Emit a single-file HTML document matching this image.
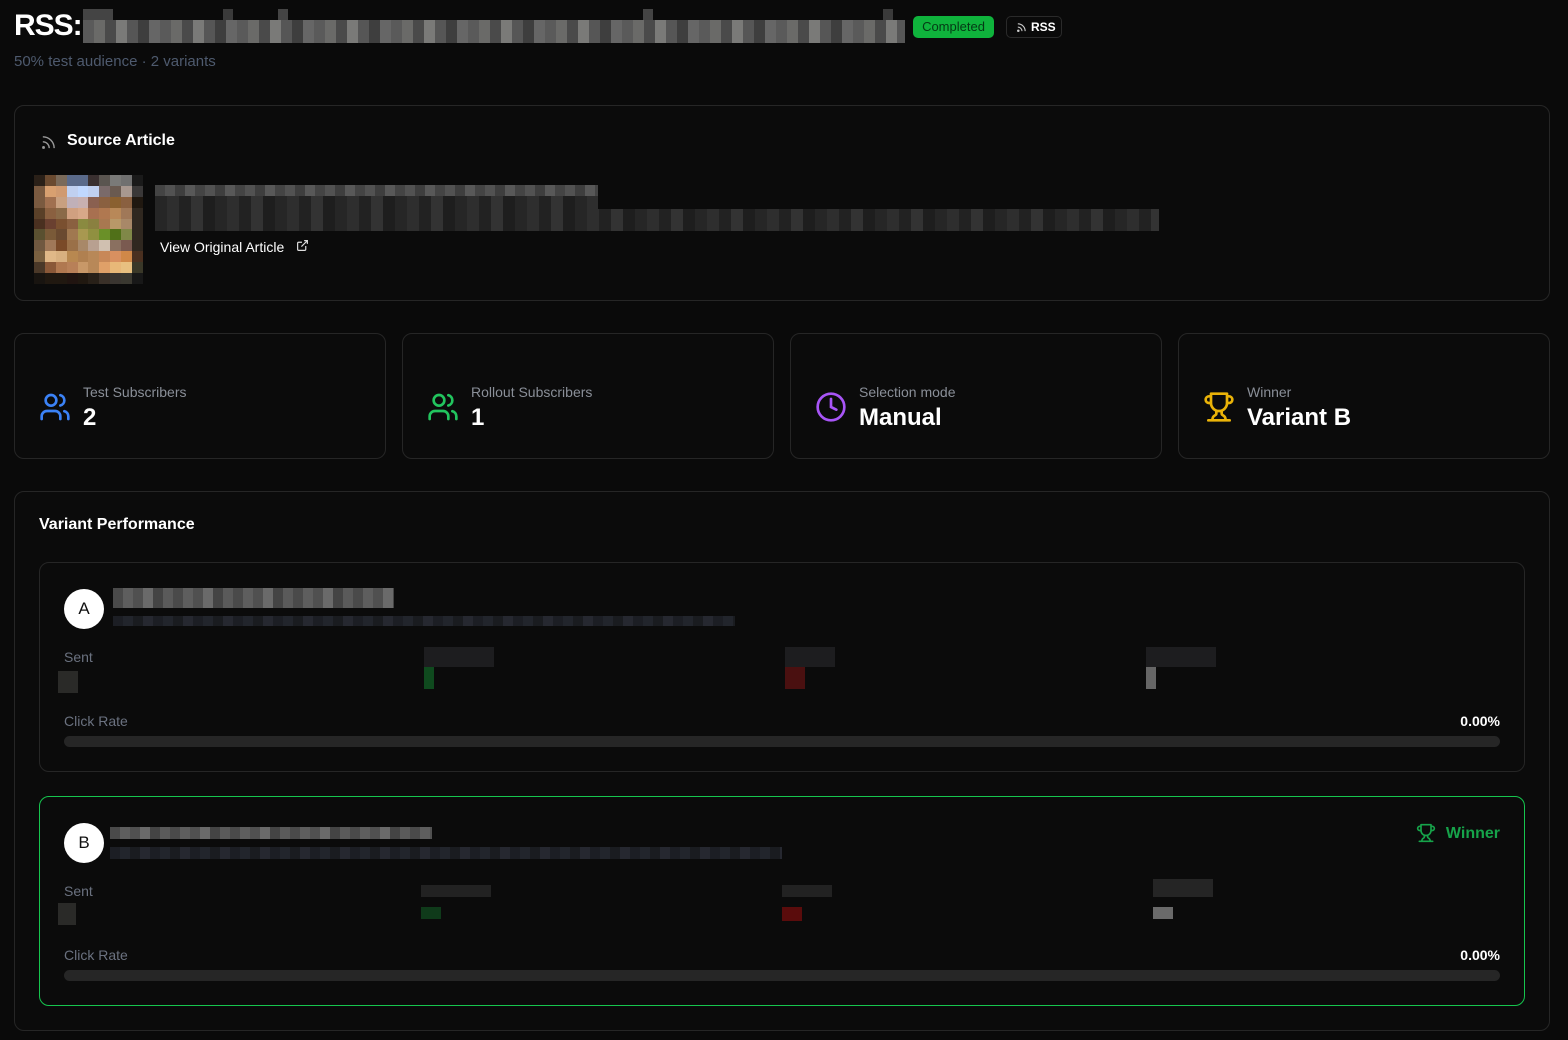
<!DOCTYPE html>
<html><head><meta charset="utf-8"><style>
*{box-sizing:border-box;margin:0;padding:0}
body{width:1568px;height:1040px;background:#0a0a0a;font-family:"Liberation Sans",sans-serif;color:#fff;position:relative;overflow:hidden}
.abs{position:absolute}
.card{position:absolute;border:1px solid #262626;border-radius:10px;background:#0b0b0b}
.blur1{background:repeating-linear-gradient(90deg,#5a5a5a 0 11px,#6a6a68 11px 22px,#4a4a4a 22px 33px,#7a7a78 33px 44px,#565656 44px 55px,#3e3e3e 55px 66px,#666 66px 77px)}
.blur2{background:repeating-linear-gradient(90deg,#262626 0 12px,#2e2e2e 12px 24px,#222 24px 36px,#333 36px 48px,#1e1e1e 48px 60px)}
.blurA{background:repeating-linear-gradient(90deg,#4a4a4a 0 10px,#5e5e5e 10px 20px,#505050 20px 30px,#6a6a6a 30px 40px,#444 40px 50px,#5a5a5a 50px 60px)}
.blurB{background:repeating-linear-gradient(90deg,#1c1e24 0 10px,#22252c 10px 20px,#1a1c20 20px 30px,#262830 30px 40px)}
.lbl{color:#6b7280;font-size:14px}
.stat .t{position:absolute;left:68px;top:50px;font-size:14px;color:#8a8f98}
.stat .v{position:absolute;left:68px;top:70px;font-size:24px;font-weight:bold;color:#fff}
.stat svg{position:absolute;left:24px;top:57px}
.bar{position:absolute;left:24px;right:24px;height:11px;border-radius:6px;background:#262626}
.circ{position:absolute;left:24px;width:40px;height:40px;border-radius:50%;background:#fff;color:#111;font-size:17px;text-align:center;line-height:40px}
.img{display:grid;grid-template-columns:repeat(10,1fr);grid-template-rows:repeat(10,1fr)}
</style></head><body>

<div class="abs" style="left:14px;top:9px;font-size:30px;font-weight:bold;letter-spacing:-1px">RSS:</div>
<div class="abs" style="left:83px;top:9px;width:822px;height:11px;background:linear-gradient(90deg,#444 0 30px,#0a0a0a 30px 140px,#3a3a3a 140px 150px,#0a0a0a 150px 195px,#444 195px 205px,#0a0a0a 205px 560px,#444 560px 570px,#0a0a0a 570px 800px,#3a3a3a 800px 810px,#0a0a0a 810px)"></div>
<div class="abs blur1" style="left:83px;top:20px;width:822px;height:23px"></div>
<div class="abs" style="left:913px;top:16px;width:81px;height:22px;background:#0fb33c;border-radius:5px;color:#053a15;font-size:13px;text-align:center;line-height:22px">Completed</div>
<div class="abs" style="left:1006px;top:16px;width:56px;height:22px;border:1px solid #2a2a2a;border-radius:5px;font-size:12px;font-weight:bold;line-height:20px;padding-left:24px">RSS
<svg class="abs" style="left:9px;top:5px" width="11" height="11" viewBox="0 0 24 24" fill="none" stroke="#ccc" stroke-width="2.5"><path d="M4 11a9 9 0 0 1 9 9M4 4a16 16 0 0 1 16 16"/><circle cx="5" cy="19" r="1.5" fill="#ccc"/></svg></div>
<div class="abs" style="left:14px;top:53px;font-size:15px;color:#4e5a6e">50% test audience · 2 variants</div>

<div class="card" style="left:14px;top:105px;width:1536px;height:196px">
  <svg class="abs" style="left:25px;top:28px" width="17" height="17" viewBox="0 0 24 24" fill="none" stroke="#9a9a9a" stroke-width="2"><path d="M4 11a9 9 0 0 1 9 9M4 4a16 16 0 0 1 16 16"/><circle cx="5" cy="19" r="1" fill="#9a9a9a"/></svg>
  <div class="abs" style="left:52px;top:26px;font-size:16px;font-weight:bold">Source Article</div>
  <div class="abs img" style="left:19px;top:69px;width:109px;height:109px">
    <i style="background:#2a2018"></i><i style="background:#6a4a30"></i><i style="background:#7a6a5a"></i><i style="background:#5a6a8a"></i><i style="background:#5a6a8a"></i><i style="background:#3a3030"></i><i style="background:#5a5550"></i><i style="background:#7a7a78"></i><i style="background:#707070"></i><i style="background:#1a1a1a"></i>
    <i style="background:#7a5a40"></i><i style="background:#d8a070"></i><i style="background:#d09a70"></i><i style="background:#c0d0f0"></i><i style="background:#c0d8ff"></i><i style="background:#c0d0f0"></i><i style="background:#7a6a6a"></i><i style="background:#6a5a50"></i><i style="background:#a89890"></i><i style="background:#3a3838"></i>
    <i style="background:#7a5a40"></i><i style="background:#a07050"></i><i style="background:#c8a080"></i><i style="background:#c0b0b8"></i><i style="background:#c8b0b0"></i><i style="background:#8a6050"></i><i style="background:#8a6040"></i><i style="background:#8a6030"></i><i style="background:#8a6040"></i><i style="background:#201810"></i>
    <i style="background:#5a4028"></i><i style="background:#8a6040"></i><i style="background:#8a6a48"></i><i style="background:#d0a080"></i><i style="background:#d8a888"></i><i style="background:#a87050"></i><i style="background:#b07850"></i><i style="background:#b88858"></i><i style="background:#a07858"></i><i style="background:#302820"></i>
    <i style="background:#4a3020"></i><i style="background:#6a4030"></i><i style="background:#7a5030"></i><i style="background:#8a6040"></i><i style="background:#8a8a40"></i><i style="background:#8a8040"></i><i style="background:#a87850"></i><i style="background:#b89868"></i><i style="background:#a88868"></i><i style="background:#302820"></i>
    <i style="background:#5a5030"></i><i style="background:#7a5a38"></i><i style="background:#6a4a30"></i><i style="background:#a07850"></i><i style="background:#a89850"></i><i style="background:#909040"></i><i style="background:#6a9028"></i><i style="background:#507018"></i><i style="background:#808848"></i><i style="background:#302820"></i>
    <i style="background:#705840"></i><i style="background:#a07858"></i><i style="background:#7a4a28"></i><i style="background:#9a7048"></i><i style="background:#a88868"></i><i style="background:#b8a090"></i><i style="background:#d0c0b0"></i><i style="background:#8a7060"></i><i style="background:#7a5a50"></i><i style="background:#302820"></i>
    <i style="background:#7a6040"></i><i style="background:#e0b888"></i><i style="background:#d8b080"></i><i style="background:#b88850"></i><i style="background:#b08050"></i><i style="background:#b88858"></i><i style="background:#c88858"></i><i style="background:#d89060"></i><i style="background:#d08848"></i><i style="background:#4a3020"></i>
    <i style="background:#4a3828"></i><i style="background:#8a5838"></i><i style="background:#b07850"></i><i style="background:#b88058"></i><i style="background:#c89868"></i><i style="background:#b88858"></i><i style="background:#e0a068"></i><i style="background:#e8b878"></i><i style="background:#e8c080"></i><i style="background:#3a3828"></i>
    <i style="background:#181410"></i><i style="background:#201810"></i><i style="background:#201810"></i><i style="background:#201410"></i><i style="background:#201810"></i><i style="background:#282018"></i><i style="background:#3a3028"></i><i style="background:#3a3530"></i><i style="background:#3a3830"></i><i style="background:#181818"></i>
  </div>
  <div class="abs" style="left:140px;top:79px;width:443px;height:11px;background:repeating-linear-gradient(90deg,#444 0 10px,#525252 10px 20px,#3e3e3e 20px 30px,#585858 30px 40px)"></div>
  <div class="abs blur2" style="left:140px;top:90px;width:443px;height:13px"></div>
  <div class="abs blur2" style="left:140px;top:103px;width:1004px;height:22px"></div>
  <div class="abs" style="left:145px;top:133px;font-size:14px">View Original Article</div>
  <svg class="abs" style="left:281px;top:133px" width="13" height="13" viewBox="0 0 24 24" fill="none" stroke="#ddd" stroke-width="2.2"><path d="M18 13v6a2 2 0 0 1-2 2H5a2 2 0 0 1-2-2V8a2 2 0 0 1 2-2h6M15 3h6v6M10 14L21 3"/></svg>
</div>

<div class="card stat" style="left:14px;top:333px;width:372px;height:126px">
  <svg width="32" height="32" viewBox="0 0 24 24" fill="none" stroke="#3b82f6" stroke-width="2" stroke-linecap="round"><path d="M16 21v-2a4 4 0 0 0-4-4H6a4 4 0 0 0-4 4v2"/><circle cx="9" cy="7" r="4"/><path d="M22 21v-2a4 4 0 0 0-3-3.87M16 3.13a4 4 0 0 1 0 7.75"/></svg>
  <div class="t">Test Subscribers</div><div class="v">2</div></div>
<div class="card stat" style="left:402px;top:333px;width:372px;height:126px">
  <svg width="32" height="32" viewBox="0 0 24 24" fill="none" stroke="#22c55e" stroke-width="2" stroke-linecap="round"><path d="M16 21v-2a4 4 0 0 0-4-4H6a4 4 0 0 0-4 4v2"/><circle cx="9" cy="7" r="4"/><path d="M22 21v-2a4 4 0 0 0-3-3.87M16 3.13a4 4 0 0 1 0 7.75"/></svg>
  <div class="t">Rollout Subscribers</div><div class="v">1</div></div>
<div class="card stat" style="left:790px;top:333px;width:372px;height:126px">
  <svg width="32" height="32" viewBox="0 0 24 24" fill="none" stroke="#a855f7" stroke-width="2" stroke-linecap="round"><circle cx="12" cy="12" r="10"/><path d="M12 6v6l4 2"/></svg>
  <div class="t">Selection mode</div><div class="v">Manual</div></div>
<div class="card stat" style="left:1178px;top:333px;width:372px;height:126px">
  <svg width="32" height="32" viewBox="0 0 24 24" fill="none" stroke="#eab308" stroke-width="2" stroke-linecap="round" stroke-linejoin="round"><path d="M6 9H4.5a2.5 2.5 0 0 1 0-5H6M18 9h1.5a2.5 2.5 0 0 0 0-5H18M4 22h16M10 14.66V17c0 .55-.47.98-.97 1.21C7.85 18.75 7 20.24 7 22M14 14.66V17c0 .55.47.98.97 1.21C16.15 18.75 17 20.24 17 22M18 2H6v7a6 6 0 0 0 12 0V2z"/></svg>
  <div class="t">Winner</div><div class="v">Variant B</div></div>

<div class="card" style="left:14px;top:491px;width:1536px;height:540px">
  <div class="abs" style="left:24px;top:24px;font-size:16px;font-weight:bold">Variant Performance</div>

  <div class="card" style="left:24px;top:70px;width:1486px;height:210px">
    <div class="circ" style="top:26px">A</div>
    <div class="abs blurA" style="left:73px;top:25px;width:281px;height:20px"></div>
    <div class="abs blurB" style="left:73px;top:53px;width:622px;height:10px"></div>
    <div class="abs lbl" style="left:24px;top:86px">Sent</div>
    <div class="abs" style="left:18px;top:108px;width:20px;height:22px;background:#2a2a28"></div>
    <div class="abs" style="left:384px;top:84px;width:70px;height:20px;background:#1d1d1f"></div>
    <div class="abs" style="left:384px;top:104px;width:10px;height:22px;background:#0f4a1e"></div>
    <div class="abs" style="left:745px;top:84px;width:50px;height:20px;background:#1d1d1f"></div>
    <div class="abs" style="left:745px;top:104px;width:20px;height:22px;background:#4a1010"></div>
    <div class="abs" style="left:1106px;top:84px;width:70px;height:20px;background:#1d1d1f"></div>
    <div class="abs" style="left:1106px;top:104px;width:10px;height:22px;background:#666"></div>
    <div class="abs lbl" style="left:24px;top:150px">Click Rate</div>
    <div class="abs" style="right:24px;top:150px;font-size:14px;font-weight:bold">0.00%</div>
    <div class="bar" style="top:173px"></div>
  </div>

  <div class="card" style="left:24px;top:304px;width:1486px;height:210px;border-color:#16c54e">
    <div class="circ" style="top:26px">B</div>
    <div class="abs blurA" style="left:70px;top:30px;width:322px;height:12px"></div>
    <div class="abs blurB" style="left:70px;top:50px;width:672px;height:12px"></div>
    <div class="abs" style="right:24px;top:28px;font-size:16px;font-weight:bold;color:#16a34a">Winner</div>
    <svg class="abs" style="right:88px;top:26px" width="20" height="20" viewBox="0 0 24 24" fill="none" stroke="#16a34a" stroke-width="2" stroke-linecap="round" stroke-linejoin="round"><path d="M6 9H4.5a2.5 2.5 0 0 1 0-5H6M18 9h1.5a2.5 2.5 0 0 0 0-5H18M4 22h16M10 14.66V17c0 .55-.47.98-.97 1.21C7.85 18.75 7 20.24 7 22M14 14.66V17c0 .55.47.98.97 1.21C16.15 18.75 17 20.24 17 22M18 2H6v7a6 6 0 0 0 12 0V2z"/></svg>
    <div class="abs lbl" style="left:24px;top:86px">Sent</div>
    <div class="abs" style="left:18px;top:106px;width:18px;height:22px;background:#2a2a28"></div>
    <div class="abs" style="left:381px;top:88px;width:70px;height:12px;background:#222"></div>
    <div class="abs" style="left:381px;top:110px;width:20px;height:12px;background:#0f3a1a"></div>
    <div class="abs" style="left:742px;top:88px;width:50px;height:12px;background:#222"></div>
    <div class="abs" style="left:742px;top:110px;width:20px;height:14px;background:#5a0c0c"></div>
    <div class="abs" style="left:1113px;top:82px;width:60px;height:18px;background:#252525"></div>
    <div class="abs" style="left:1113px;top:110px;width:20px;height:12px;background:#6a6a6a"></div>
    <div class="abs lbl" style="left:24px;top:150px">Click Rate</div>
    <div class="abs" style="right:24px;top:150px;font-size:14px;font-weight:bold">0.00%</div>
    <div class="bar" style="top:173px"></div>
  </div>
</div>
</body></html>
